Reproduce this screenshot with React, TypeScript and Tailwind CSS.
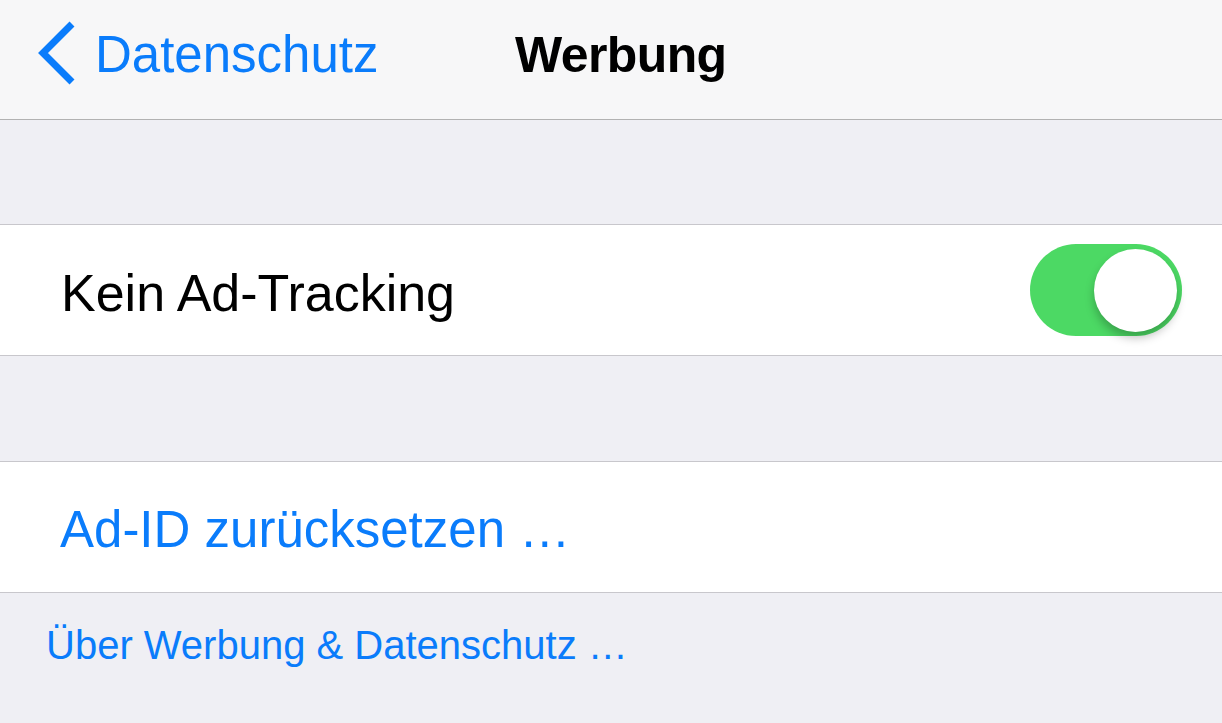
import React from "react";

export default function App() {
  const font = { fontFamily: '"Liberation Sans", Arial, sans-serif' };
  return (
    <div className="w-[1222px] h-[723px] overflow-hidden bg-[#efeff4] flex flex-col" style={font}>
      {/* Nav bar */}
      <div className="h-[120px] shrink-0 bg-[#f7f7f8] border-b border-[#b2b2b2] flex items-start pl-[37px] pt-[21px]">
        <div className="w-[478px] flex items-start gap-[18px]">
          <svg width="40" height="64" viewBox="0 0 40 64" className="block shrink-0">
            <path d="M35 3 L6 32 L35 61" fill="none" stroke="#0a7cfb" strokeWidth="7" strokeLinecap="butt" strokeLinejoin="miter" />
          </svg>
          <span className="mt-[8px] text-[51px] leading-none text-[#0a7cfb]">Datenschutz</span>
        </div>
        <span className="mt-[9px] text-[50px] leading-none font-bold text-black tracking-[-0.6px]">Werbung</span>
      </div>
      {/* Spacer */}
      <div className="h-[104px] shrink-0" />
      {/* Toggle row */}
      <div className="h-[132px] shrink-0 bg-white border-y border-[#c8c7cc] flex items-center justify-between pl-[61px] pr-[40px]">
        <span className="text-[52px] leading-none text-black pt-[5px]">Kein Ad-Tracking</span>
        <div className="w-[152px] h-[92px] rounded-full bg-[#4cd964] flex items-center justify-end pr-[5px]">
          <div className="w-[83px] h-[83px] rounded-full bg-white shadow-[0_6px_10px_rgba(0,0,0,0.25)]" />
        </div>
      </div>
      {/* Spacer */}
      <div className="h-[105px] shrink-0" />
      {/* Reset row */}
      <div className="h-[132px] shrink-0 bg-white border-y border-[#c8c7cc] flex items-center pl-[60px]">
        <span className="text-[51px] leading-none text-[#0a7cfb] pt-[4px]">Ad-ID zurücksetzen …</span>
      </div>
      {/* Footer */}
      <div className="pl-[46px] pt-[32px]">
        <span className="text-[40px] leading-none text-[#0a7cfb]">Über Werbung &amp; Datenschutz …</span>
      </div>
    </div>
  );
}
